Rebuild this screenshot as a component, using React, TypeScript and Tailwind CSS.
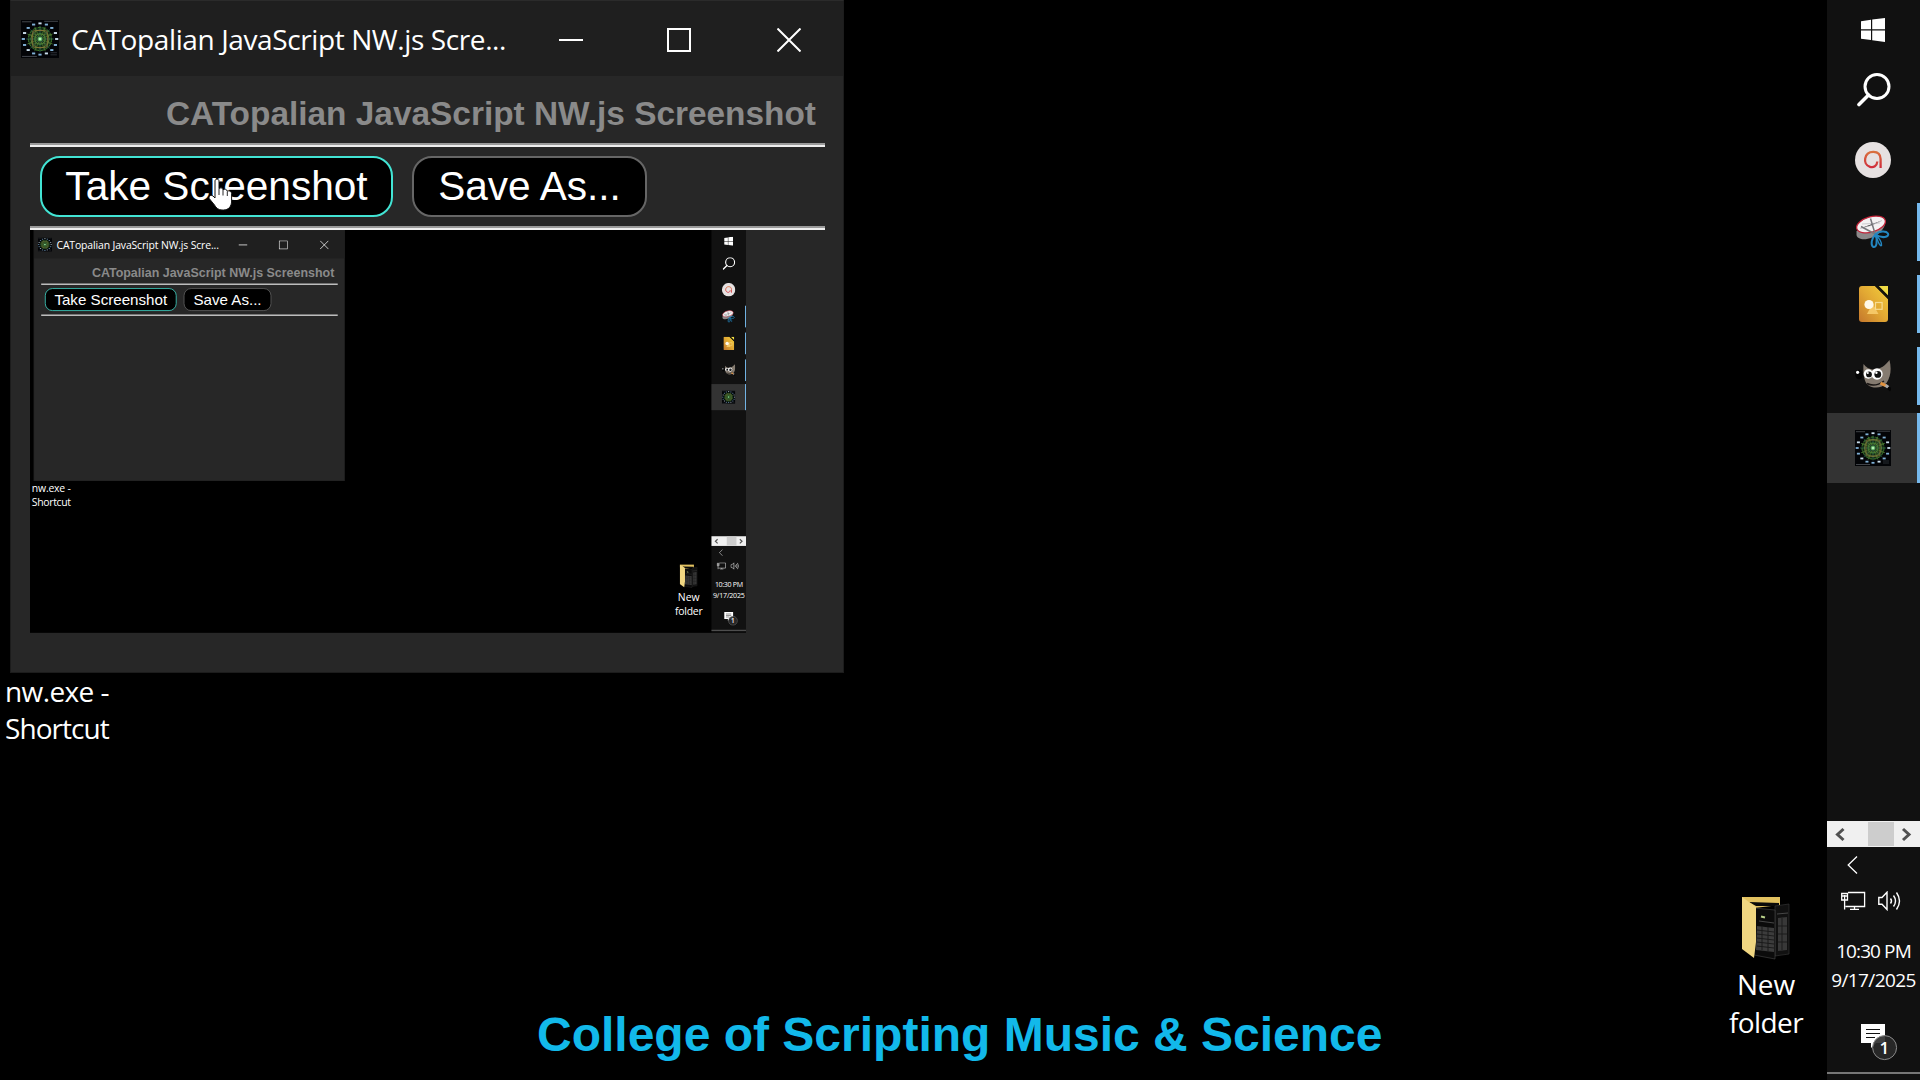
import React from "react";

const SPOKES = Array.from({ length: 16 }, (_, i) => (i * Math.PI) / 8);

function AppIcon({ className }: { className: string }) {
  return (
    <svg viewBox="0 0 36 36" className={className}>
      <rect width="36" height="36" fill="#030407" />
      <circle cx="18" cy="18" r="11.5" fill="#142a16" />
      {SPOKES.map((a, i) => (
        <g key={i}>
          <line
            x1="18"
            y1="18"
            x2={18 + Math.cos(a) * 13}
            y2={18 + Math.sin(a) * 12.5}
            stroke={i % 2 ? "#4a7f34" : "#2f6a5a"}
            strokeWidth="0.7"
          />
          <rect
            x={18 + Math.cos(a) * 15.8 - 1.5}
            y={18 + Math.sin(a) * 14.8 - 0.9}
            width="3"
            height="1.8"
            fill={i % 3 ? "#7fb0d6" : "#c8dcea"}
          />
        </g>
      ))}
      <circle cx="18" cy="18" r="11" fill="none" stroke="#3c7a2a" strokeWidth="0.9" strokeDasharray="3 1.5" />
      <circle cx="18" cy="18" r="8.5" fill="none" stroke="#6f8a3a" strokeWidth="0.8" />
      <rect x="11" y="10" width="14" height="16" rx="2" fill="none" stroke="#8c7438" strokeWidth="0.8" />
      <circle cx="18" cy="18" r="5" fill="none" stroke="#4a9a3f" strokeWidth="0.8" />
      <path d="M7 14H29M7 22H29M14 8V28M22 8V28" stroke="#5d7a34" strokeWidth="0.6" />
      <circle cx="18" cy="18" r="2.2" fill="#5fae62" />
      <circle cx="18" cy="18" r="1.3" fill="#b4f0b4" />
      <path d="M1 1.7H10M22 1.2H35M1 34.5H15" stroke="#6a6f76" strokeWidth="0.6" />
      <path d="M28 31H34M28 33H34" stroke="#3a3f46" strokeWidth="0.7" />
    </svg>
  );
}

function WindowsIcon() {
  return (
    <svg viewBox="0 0 24 24" className="size-6">
      <path d="M0 3.2L10 1.8V11.3H0ZM11.2 1.6L24 0V11.3H11.2ZM0 12.5H10V22L0 20.8ZM11.2 12.5H24V24L11.2 22.2Z" fill="#fff" />
    </svg>
  );
}

function SearchIcon() {
  return (
    <svg viewBox="0 0 34 34" className="size-[34px]" fill="none" stroke="#fff">
      <circle cx="20" cy="13.5" r="12" strokeWidth="3" />
      <path d="M11.5 22L2 31.5" strokeWidth="3.6" strokeLinecap="round" />
    </svg>
  );
}

function RedLoopIcon() {
  return (
    <svg viewBox="0 0 36 36" className="size-9">
      <defs>
        <linearGradient id="loop" x1="0" y1="0" x2="0" y2="1">
          <stop offset="0" stopColor="#d9703e" />
          <stop offset="1" stopColor="#cf2b3c" />
        </linearGradient>
      </defs>
      <circle cx="18" cy="18" r="18" fill="#e6e1e1" />
      <path
        d="M22.3 19.5C22 24 18.5 26 15 24.8C10.8 23.5 9.6 19.5 10.2 16.5C11 12 14.3 9.8 18.5 9.9C23.3 10 25.5 13 25.6 17V26"
        fill="none"
        stroke="url(#loop)"
        strokeWidth="2.3"
      />
    </svg>
  );
}

function SnipIcon() {
  return (
    <svg viewBox="0 0 36 36" className="size-9">
      <path d="M1.5 17V21C2 25 9 27 17 23.5C25 20 30 14 30 9Z" fill="#8b8889" />
      <ellipse cx="16" cy="10.5" rx="14.8" ry="7.6" fill="#f4f2f3" stroke="#c3253a" strokeWidth="1.3" transform="rotate(-16 16 10.5)" />
      <path d="M5 14.5L16 11.5L27 6.5M7 10L25 9" stroke="#bcbcc0" strokeWidth="0.7" />
      <path d="M15.5 4.5L20 19.5M6 12.5L20 20" stroke="#77777c" strokeWidth="1.5" />
      <g fill="none" stroke="#2386c0" strokeWidth="2">
        <path d="M20.5 20.5C24 17 31 16.5 33 19.5C34.8 23 27 25 20.5 20.5Z" />
        <path d="M20.5 20.5C16.5 24 15.5 31 18 32.8C21.5 34.5 23 27 20.5 20.5Z" />
        <path d="M20.5 20.5C24 24 27 28 26.5 31.5C25 33 22.5 27 20.5 20.5Z" strokeWidth="1.4" />
      </g>
    </svg>
  );
}

function DrawIcon() {
  return (
    <svg viewBox="0 0 29 36" className="h-9 w-[29px]">
      <defs>
        <linearGradient id="doc" x1="1" y1="0" x2="0" y2="1">
          <stop offset="0" stopColor="#f3cf3c" />
          <stop offset="0.5" stopColor="#e2a833" />
          <stop offset="1" stopColor="#c4772c" />
        </linearGradient>
      </defs>
      <path d="M3 0H16L29 13V33Q29 36 26 36H3Q0 36 0 33V3Q0 0 3 0Z" fill="url(#doc)" />
      <path d="M19.5 0H29V9.5Z" fill="#f0dc45" />
      <path d="M16 0H19.5L29 9.5V13Z" fill="#17140a" />
      <path d="M8 28L13.5 17.5L19.5 28Z" fill="#f5c766" />
      <circle cx="10" cy="18.5" r="4.6" fill="#fff8e8" />
      <rect x="16.5" y="16.5" width="6.6" height="6.8" fill="none" stroke="#f7dd93" strokeWidth="1.2" />
    </svg>
  );
}

function GimpIcon() {
  return (
    <svg viewBox="0 0 36 36" className="size-9">
      <path d="M8.5 6C11 9 14 11.5 19 11.5C25 11.5 31 7 34.5 2C36.5 10 36 19 31.5 25C27 30.5 18 31 13 27C8.5 23.5 8 14 8.5 6Z" fill="#857b70" />
      <ellipse cx="4" cy="16.5" rx="3.8" ry="4.8" fill="#050505" />
      <circle cx="2.6" cy="14.3" r="1.6" fill="#fff" />
      <circle cx="13.3" cy="16" r="4.7" fill="#fff" />
      <circle cx="22" cy="16" r="5.7" fill="#fff" />
      <circle cx="14" cy="16.4" r="2.9" fill="#111" />
      <circle cx="22.8" cy="16.4" r="3.4" fill="#111" />
      <circle cx="12.8" cy="15" r="1" fill="#fff" />
      <circle cx="21.4" cy="14.8" r="1.2" fill="#fff" />
      <path d="M12 25.5Q20 29.5 29 23" stroke="#1a1614" strokeWidth="1.5" fill="none" />
      <path d="M25.5 25L31 27.8" stroke="#e0923f" strokeWidth="3" />
      <path d="M30.5 27.3L33.5 29.5" stroke="#aaa" strokeWidth="3" />
      <path d="M33 29.5L36 32" stroke="#050505" strokeWidth="3.5" />
    </svg>
  );
}

function TaskItem({ state = "idle", children }: { state?: "idle" | "open" | "active"; children: React.ReactNode }) {
  return (
    <div className={`relative flex h-[70px] items-center justify-center pr-[1px] ${state === "active" ? "bg-[#333333]" : ""}`}>
      {children}
      {state === "open" && <div className="absolute top-[6px] right-0 h-[58px] w-[3px] bg-[#76b9ed]" />}
      {state === "active" && <div className="absolute top-0 right-0 h-[70px] w-[3px] bg-[#76b9ed]" />}
    </div>
  );
}

function Taskbar() {
  return (
    <aside className="flex h-full w-[93px] shrink-0 flex-col bg-[#111111] font-['Open_Sans',sans-serif] text-white">
      <div className="flex h-[60px] items-center pl-[34px]">
        <WindowsIcon />
      </div>
      <div className="flex h-[59px] items-center pl-[30px]">
        <SearchIcon />
      </div>
      <div className="mt-[6px] flex flex-col gap-[2px]">
        <TaskItem><RedLoopIcon /></TaskItem>
        <TaskItem state="open"><SnipIcon /></TaskItem>
        <TaskItem state="open"><DrawIcon /></TaskItem>
        <TaskItem state="open"><GimpIcon /></TaskItem>
        <TaskItem state="active"><AppIcon className="size-9" /></TaskItem>
      </div>
      <div className="mt-[338px] flex h-[26px] items-center bg-[#f0f0f0]">
        <svg viewBox="0 0 41 26" className="h-[26px] w-[41px]">
          <path d="M16.5 8L10.5 13.5L16.5 19" fill="none" stroke="#505050" strokeWidth="3" />
        </svg>
        <div className="h-6 w-[26px] bg-[#cdcdcd]" />
        <svg viewBox="0 0 26 26" className="size-[26px]">
          <path d="M9 8L15 13.5L9 19" fill="none" stroke="#505050" strokeWidth="3" />
        </svg>
      </div>
      <div className="flex h-9 items-center pl-5">
        <svg viewBox="0 0 12 18" className="h-[18px] w-3" fill="none" stroke="#fff" strokeWidth="1.3">
          <path d="M10 0.5L1.2 9L10 17.5" />
        </svg>
      </div>
      <div className="flex h-9 items-center gap-[12px] pl-[14px]">
        <svg viewBox="0 0 25 20" className="h-5 w-[25px]" fill="none" stroke="#fff" strokeWidth="1.3">
          <path d="M7 1.5H23.6V15.5H4.5M0.7 2.5H6.5V9H0.7ZM3.6 4V9V18.5M1 5H6M13.5 15.5V18M9 18.3H18" />
        </svg>
        <svg viewBox="0 0 24 20" className="h-5 w-6" fill="none" stroke="#fff" strokeWidth="1.4">
          <path d="M0.8 6.5H4L9 1.2V18.5L4 13.2H0.8Z" />
          <path d="M12.5 7.5Q14.5 10 12.5 12.5" />
          <path d="M15.5 4.5Q19.5 10 15.5 15.5" />
          <path d="M18.5 1.5Q24.5 10 18.5 18.5" />
        </svg>
      </div>
      <div className="mt-[18px] flex h-[60px] flex-col items-center text-[19px] leading-[29px] whitespace-nowrap">
        <span className="tracking-[-0.9px]">10:30 PM</span>
        <span className="tracking-[-0.6px]">9/17/2025</span>
      </div>
      <div className="mt-[27px] flex h-[48px] pl-[34px]">
        <svg viewBox="0 0 37 37" className="size-[37px]">
          <path d="M0 0H24V19H15L10 24V19H0Z" fill="#fff" />
          <path d="M5 5.5H19M5 9.5H19M5 13.5H14" stroke="#111" strokeWidth="1.2" />
          <circle cx="23.6" cy="23.6" r="12" fill="#2a2a2a" fillOpacity="0.9" stroke="#8a8a8a" />
          <text x="23.4" y="30" textAnchor="middle" fill="#fff" fontSize="17" fontWeight="600" fontFamily="Open Sans">1</text>
        </svg>
      </div>
      <div className="h-[2px] bg-[#777777]" />
    </aside>
  );
}

function Rule() {
  return <div className="h-[4px] border-t-2 border-b-2 border-t-[#9a9a9a] border-b-[#eeeeee]" />;
}

function HandCursor() {
  return (
    <svg viewBox="0 0 26 34" className="pointer-events-none absolute top-[31px] left-[178px] h-[34px] w-[26px]">
      <path
        d="M7 3C7 0.5 11 0.5 11 3V10.5C12 9.3 14.8 9.8 15 11.8C16.3 10.6 19 11.2 19.3 13.2C21 12.3 23.6 13 23.6 15.5V23C23.6 28.5 20.5 32 15.5 32H14C10 32 8 29.5 6.5 27L1.2 20.5C0.5 18 3 16.5 5 18L7 20Z"
        fill="#fff"
        stroke="#111"
        strokeWidth="1"
      />
      <path d="M11 10.5V17M15 12V17.5M19.3 13.5V18" stroke="#111" strokeWidth="0.9" />
    </svg>
  );
}

function FolderIcon() {
  return (
    <svg viewBox="0 0 48 64" className="h-16 w-12">
      <path d="M0 1H38V9L12 12L0 8Z" fill="#e3c260" />
      <path d="M7 6L37 7V10L14 10Z" fill="#0a0a0a" />
      <path d="M33 10L47 8V58L33 60Z" fill="#111" stroke="#3a3a3a" strokeWidth="0.6" />
      <path d="M36 22L45 21V54L36 55Z" fill="#383838" />
      <path d="M12 12L33 14V63L12 59Z" fill="#0b0b0b" stroke="#555" strokeWidth="0.5" />
      <path d="M15 30L32 32V56L14 54Z" fill="#3c3c3c" />
      <path d="M15 34L32 36M15 38L32 40M15 42L32 44M15 46L32 48M15 50L32 52M20 30V54M26 31V55M40 22V54M36 30H45M36 38H45M36 46H45" stroke="#1b1b1b" strokeWidth="1" />
      <path d="M19 20.5L23 21.5" stroke="#b9d08a" strokeWidth="2" />
      <path d="M17 25L32 27M35 18L46 17" stroke="#555" strokeWidth="0.8" />
      <path d="M0 1L14 11V46L12 62L0 53Z" fill="#f0d681" />
    </svg>
  );
}

function AppWindow({ preview }: { preview?: React.ReactNode }) {
  return (
    <section className="absolute top-0 left-[10px] flex h-[673px] w-[834px] flex-col border border-t-[#2b2b2b] border-[#1c1c1c] bg-[#272727]">
      <header className="flex h-[75px] shrink-0 items-center bg-[#1f1f1f] pl-[10px]">
        <AppIcon className="size-[38px]" />
        <h1 className="ml-[12px] w-[446px] pt-[1px] font-['Open_Sans',sans-serif] text-[28px] leading-[40px] tracking-[-0.39px] whitespace-nowrap text-white">
          CATopalian JavaScript NW.js Scre...
        </h1>
        <svg viewBox="0 0 24 24" className="mt-[3px] ml-[42px] size-6"><path d="M0 12H24" stroke="#fff" strokeWidth="2" /></svg>
        <svg viewBox="0 0 24 24" className="mt-[3px] ml-[84px] size-6"><rect x="1" y="1" width="22" height="22" fill="none" stroke="#fff" strokeWidth="2" /></svg>
        <svg viewBox="0 0 24 24" className="mt-[3px] ml-[86px] size-6"><path d="M0.5 0.5L23.5 23.5M23.5 0.5L0.5 23.5" stroke="#fff" strokeWidth="2" /></svg>
      </header>
      <div className="flex flex-col pr-[18px] pl-[19px] font-['Liberation_Sans',Arial,sans-serif]">
        <h2 className="flex h-[67px] items-center justify-end pt-[9px] pr-[9px] text-[33.4px] font-bold whitespace-nowrap text-[#8a8a8a]">
          CATopalian JavaScript NW.js Screenshot
        </h2>
        <Rule />
        <div className="relative flex h-[79px] gap-[19px] pt-[9px] pl-[10px]">
          <button className="h-[61px] w-[353px] rounded-[20px] border-2 border-[#42e4d4] bg-black pb-px text-[40.6px] leading-none whitespace-nowrap text-white">
            Take Screenshot
          </button>
          <button className="h-[61px] w-[235px] rounded-[20px] border-2 border-[#666666] bg-black pb-px text-[40.6px] leading-none whitespace-nowrap text-white">
            Save As...
          </button>
          {preview && <HandCursor />}
        </div>
        <Rule />
        {preview}
      </div>
    </section>
  );
}

function Desktop({ preview, caption }: { preview?: React.ReactNode; caption?: string }) {
  return (
    <div className="relative flex h-[1080px] w-[1920px] overflow-hidden bg-black">
      <main className="relative flex-1 font-['Open_Sans',sans-serif] text-[28px] text-white">
        <div className="absolute top-[673px] left-[5px] flex flex-col leading-[37px] whitespace-nowrap">
          <span className="tracking-[-0.6px]">nw.exe -</span>
          <span className="tracking-[-0.95px]">Shortcut</span>
        </div>
        <AppWindow preview={preview} />
        <div className="absolute top-[896px] left-[1716px] flex w-[100px] flex-col items-center text-center leading-[37px]">
          <FolderIcon />
          <span className="mt-[6px] tracking-[-0.1px]">New</span>
          <span className="mt-px tracking-[-0.6px]">folder</span>
        </div>
        {caption && (
          <p className="absolute top-[1006px] left-[537px] font-['Liberation_Sans',Arial,sans-serif] text-[48px] leading-[58px] font-bold whitespace-nowrap text-[#12b9ea]">
            {caption}
          </p>
        )}
      </main>
      <Taskbar />
    </div>
  );
}

export default function App() {
  const preview = (
    <div className="h-[403px] w-[716px] overflow-hidden">
      <div className="h-[1080px] w-[1920px] origin-top-left scale-[0.373]">
        <Desktop />
      </div>
    </div>
  );
  return <Desktop preview={preview} caption="College of Scripting Music &amp; Science" />;
}
